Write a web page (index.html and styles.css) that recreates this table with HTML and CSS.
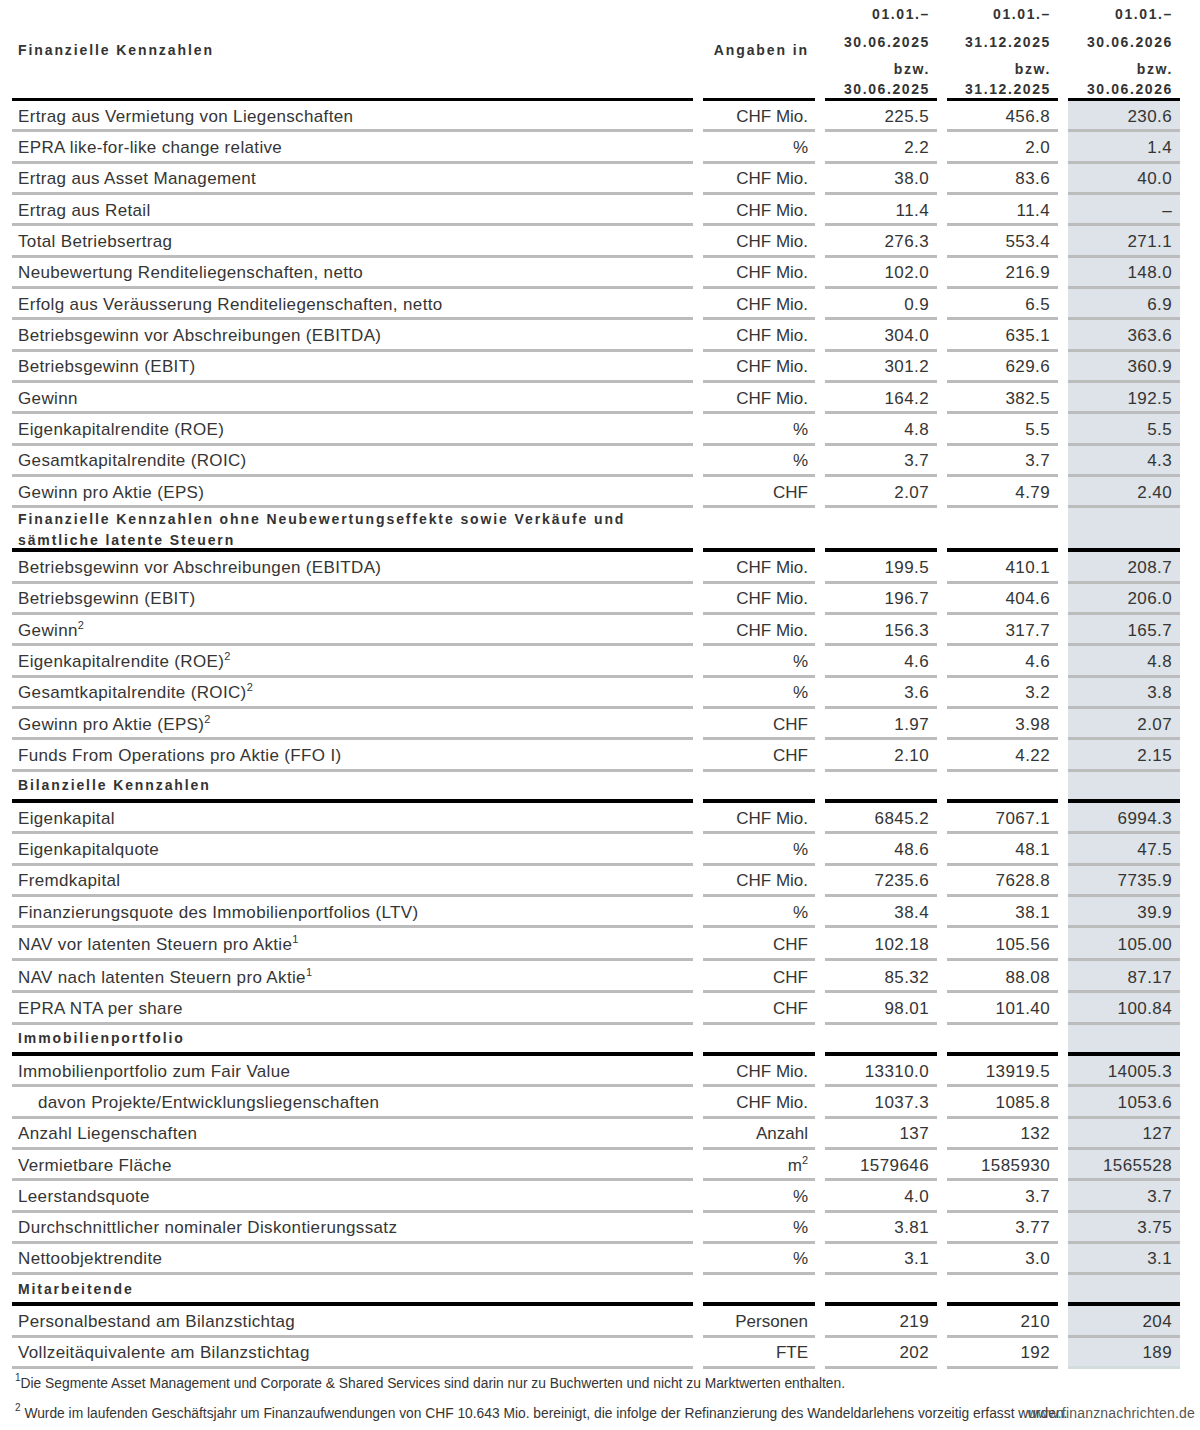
FILE: index.html
```html
<!doctype html>
<html lang="de">
  <head>
    <meta charset="UTF-8" />
    <meta name="viewport" content="width=device-width, initial-scale=1.0" />
    <title>Finanzielle Kennzahlen</title>
    <link rel="stylesheet" href="styles.css">
  </head>
  <body>
    <main class="Page">
      <table class="Kpi">
        <colgroup>
          <col class="Kpi-colLabel" />
          <col class="Kpi-colUnit" />
          <col class="Kpi-colNum" />
          <col class="Kpi-colNum Kpi-colNum--narrow" />
          <col class="Kpi-colNum" />
        </colgroup>
        <thead>
          <tr>
            <th class="Kpi-head Kpi-head--label">Finanzielle Kennzahlen</th>
            <th class="Kpi-head Kpi-head--unit">Angaben in</th>
            <th class="Kpi-head Kpi-head--date">
              <span class="l1">01.01.–</span><span class="l2">30.06.2025</span><span class="l3">bzw.</span><span class="l4">30.06.2025</span>
            </th>
            <th class="Kpi-head Kpi-head--date">
              <span class="l1">01.01.–</span><span class="l2">31.12.2025</span><span class="l3">bzw.</span><span class="l4">31.12.2025</span>
            </th>
            <th class="Kpi-head Kpi-head--date">
              <span class="l1">01.01.–</span><span class="l2">30.06.2026</span><span class="l3">bzw.</span><span class="l4">30.06.2026</span>
            </th>
          </tr>
        </thead>
        <tbody>
          <tr class="Row"><td>Ertrag aus Vermietung von Liegenschaften</td><td>CHF Mio.</td><td>225.5</td><td>456.8</td><td class="cur">230.6</td></tr>
          <tr class="Row"><td>EPRA like-for-like change relative</td><td>%</td><td>2.2</td><td>2.0</td><td class="cur">1.4</td></tr>
          <tr class="Row"><td>Ertrag aus Asset Management</td><td>CHF Mio.</td><td>38.0</td><td>83.6</td><td class="cur">40.0</td></tr>
          <tr class="Row"><td>Ertrag aus Retail</td><td>CHF Mio.</td><td>11.4</td><td>11.4</td><td class="cur">–</td></tr>
          <tr class="Row"><td>Total Betriebsertrag</td><td>CHF Mio.</td><td>276.3</td><td>553.4</td><td class="cur">271.1</td></tr>
          <tr class="Row"><td>Neubewertung Renditeliegenschaften, netto</td><td>CHF Mio.</td><td>102.0</td><td>216.9</td><td class="cur">148.0</td></tr>
          <tr class="Row"><td>Erfolg aus Veräusserung Renditeliegenschaften, netto</td><td>CHF Mio.</td><td>0.9</td><td>6.5</td><td class="cur">6.9</td></tr>
          <tr class="Row"><td>Betriebsgewinn vor Abschreibungen (EBITDA)</td><td>CHF Mio.</td><td>304.0</td><td>635.1</td><td class="cur">363.6</td></tr>
          <tr class="Row"><td>Betriebsgewinn (EBIT)</td><td>CHF Mio.</td><td>301.2</td><td>629.6</td><td class="cur">360.9</td></tr>
          <tr class="Row"><td>Gewinn</td><td>CHF Mio.</td><td>164.2</td><td>382.5</td><td class="cur">192.5</td></tr>
          <tr class="Row"><td>Eigenkapitalrendite (ROE)</td><td>%</td><td>4.8</td><td>5.5</td><td class="cur">5.5</td></tr>
          <tr class="Row"><td>Gesamtkapitalrendite (ROIC)</td><td>%</td><td>3.7</td><td>3.7</td><td class="cur">4.3</td></tr>
          <tr class="Row"><td>Gewinn pro Aktie (EPS)</td><td>CHF</td><td>2.07</td><td>4.79</td><td class="cur">2.40</td></tr>

          <tr class="Section Section--double"><td><div class="Section-text">Finanzielle Kennzahlen ohne Neubewertungseffekte sowie Verkäufe und<br />sämtliche latente Steuern</div></td><td></td><td></td><td></td><td class="cur"></td></tr>
          <tr class="Row"><td>Betriebsgewinn vor Abschreibungen (EBITDA)</td><td>CHF Mio.</td><td>199.5</td><td>410.1</td><td class="cur">208.7</td></tr>
          <tr class="Row"><td>Betriebsgewinn (EBIT)</td><td>CHF Mio.</td><td>196.7</td><td>404.6</td><td class="cur">206.0</td></tr>
          <tr class="Row"><td>Gewinn<sup>2</sup></td><td>CHF Mio.</td><td>156.3</td><td>317.7</td><td class="cur">165.7</td></tr>
          <tr class="Row"><td>Eigenkapitalrendite (ROE)<sup>2</sup></td><td>%</td><td>4.6</td><td>4.6</td><td class="cur">4.8</td></tr>
          <tr class="Row"><td>Gesamtkapitalrendite (ROIC)<sup>2</sup></td><td>%</td><td>3.6</td><td>3.2</td><td class="cur">3.8</td></tr>
          <tr class="Row"><td>Gewinn pro Aktie (EPS)<sup>2</sup></td><td>CHF</td><td>1.97</td><td>3.98</td><td class="cur">2.07</td></tr>
          <tr class="Row"><td>Funds From Operations pro Aktie (FFO I)</td><td>CHF</td><td>2.10</td><td>4.22</td><td class="cur">2.15</td></tr>

          <tr class="Section"><td>Bilanzielle Kennzahlen</td><td></td><td></td><td></td><td class="cur"></td></tr>
          <tr class="Row"><td>Eigenkapital</td><td>CHF Mio.</td><td>6845.2</td><td>7067.1</td><td class="cur">6994.3</td></tr>
          <tr class="Row"><td>Eigenkapitalquote</td><td>%</td><td>48.6</td><td>48.1</td><td class="cur">47.5</td></tr>
          <tr class="Row"><td>Fremdkapital</td><td>CHF Mio.</td><td>7235.6</td><td>7628.8</td><td class="cur">7735.9</td></tr>
          <tr class="Row"><td>Finanzierungsquote des Immobilienportfolios (LTV)</td><td>%</td><td>38.4</td><td>38.1</td><td class="cur">39.9</td></tr>
          <tr class="Row Row--tall"><td>NAV vor latenten Steuern pro Aktie<sup>1</sup></td><td>CHF</td><td>102.18</td><td>105.56</td><td class="cur">105.00</td></tr>
          <tr class="Row Row--tall"><td>NAV nach latenten Steuern pro Aktie<sup>1</sup></td><td>CHF</td><td>85.32</td><td>88.08</td><td class="cur">87.17</td></tr>
          <tr class="Row"><td>EPRA NTA per share</td><td>CHF</td><td>98.01</td><td>101.40</td><td class="cur">100.84</td></tr>

          <tr class="Section"><td>Immobilienportfolio</td><td></td><td></td><td></td><td class="cur"></td></tr>
          <tr class="Row"><td>Immobilienportfolio zum Fair Value</td><td>CHF Mio.</td><td>13310.0</td><td>13919.5</td><td class="cur">14005.3</td></tr>
          <tr class="Row"><td class="indent">davon Projekte/Entwicklungsliegenschaften</td><td>CHF Mio.</td><td>1037.3</td><td>1085.8</td><td class="cur">1053.6</td></tr>
          <tr class="Row"><td>Anzahl Liegenschaften</td><td>Anzahl</td><td>137</td><td>132</td><td class="cur">127</td></tr>
          <tr class="Row"><td>Vermietbare Fläche</td><td>m<sup>2</sup></td><td>1579646</td><td>1585930</td><td class="cur">1565528</td></tr>
          <tr class="Row"><td>Leerstandsquote</td><td>%</td><td>4.0</td><td>3.7</td><td class="cur">3.7</td></tr>
          <tr class="Row"><td>Durchschnittlicher nominaler Diskontierungssatz</td><td>%</td><td>3.81</td><td>3.77</td><td class="cur">3.75</td></tr>
          <tr class="Row"><td>Nettoobjektrendite</td><td>%</td><td>3.1</td><td>3.0</td><td class="cur">3.1</td></tr>

          <tr class="Section"><td>Mitarbeitende</td><td></td><td></td><td></td><td class="cur"></td></tr>
          <tr class="Row"><td>Personalbestand am Bilanzstichtag</td><td>Personen</td><td>219</td><td>210</td><td class="cur">204</td></tr>
          <tr class="Row Row--last"><td>Vollzeitäquivalente am Bilanzstichtag</td><td>FTE</td><td>202</td><td>192</td><td class="cur">189</td></tr>
        </tbody>
      </table>

      <div class="Notes">
        <p><sup>1</sup>Die Segmente Asset Management und Corporate &amp; Shared Services sind darin nur zu Buchwerten und nicht zu Marktwerten enthalten.</p>
        <p><sup>2</sup> Wurde im laufenden Geschäftsjahr um Finanzaufwendungen von CHF 10.643 Mio. bereinigt, die infolge der Refinanzierung des Wandeldarlehens vorzeitig erfasst wurden.</p>
      </div>

      <span class="Watermark">www.finanznachrichten.de</span>
    </main>
  </body>
</html>
```

FILE: styles.css
```css
:root {
  --color-text: #353535;
  --color-rule: #bcbcbc;
  --color-strong: #000;
  --color-current: #dde3e8;
}

body {
  margin: 0;
  font-family: "Liberation Sans", Arial, sans-serif;
  color: var(--color-text);
  background-color: #fff;
}

.Page {
  position: relative;
  width: 1200px;
  height: 1430px;
  overflow: hidden;
}

/* Table */
.Kpi {
  margin-left: 2px;
  border-collapse: separate;
  border-spacing: 10px 0;
  table-layout: fixed;
  width: 1188px;
}

.Kpi-colLabel { width: 681px; }
.Kpi-colUnit { width: 112px; }
.Kpi-colNum { width: 112px; }
.Kpi-colNum--narrow { width: 111px; }

.Kpi th,
.Kpi td {
  padding: 0 7px;
  box-sizing: border-box;
}

/* Header */
.Kpi-head {
  height: 101px;
  border-bottom: 3px solid var(--color-strong);
  font-size: 14px;
  font-weight: bold;
  letter-spacing: 1.9px;
  color: #333;
  vertical-align: middle;
}

.Kpi-head--label {
  text-align: left;
  padding-left: 6px !important;
  padding-top: 2px !important;
}

.Kpi-head--unit {
  text-align: right;
  padding-right: 6px !important;
  padding-top: 2px !important;
}

.Kpi-head--date {
  text-align: right;
  vertical-align: top;
  letter-spacing: 1.6px;
  padding-right: 7px !important;
}

.Kpi-head--date span {
  display: block;
}

.Kpi-head--date .l1,
.Kpi-head--date .l2 { height: 28px; line-height: 28px; }
.Kpi-head--date .l3 { height: 24px; line-height: 26px; }
.Kpi-head--date .l4 { height: 18px; line-height: 18px; }

/* Data rows */
.Row td {
  height: 31.33px;
  padding-top: 3px;
  border-bottom: 3px solid var(--color-rule);
  font-size: 17px;
  text-align: right;
  vertical-align: middle;
  white-space: nowrap;
}

.Row--tall td {
  height: 32.5px;
  padding-top: 5px;
}

.Row td:first-child {
  text-align: left;
  padding-left: 6px;
  letter-spacing: 0.35px;
}

.Row td:nth-child(n + 3) {
  letter-spacing: 0.4px;
  padding-right: 8px;
}

.Row td.indent {
  padding-left: 26px;
}

.Row sup,
.Notes sup {
  font-size: 11px;
  line-height: 0;
  vertical-align: 7px;
}

.cur {
  background-color: var(--color-current);
}

.Row--last td.cur {
  border-bottom-color: #d3dcdc;
}

/* Section headings */
.Section td {
  height: 31.33px;
  border-bottom: 4px solid var(--color-strong);
  font-size: 14px;
  font-weight: bold;
  letter-spacing: 1.9px;
  color: #333;
  vertical-align: middle;
}

.Section td:first-child {
  padding-left: 6px;
}

.Section--double td {
  height: 44px;
}

.Section-text {
  height: 40px;
  line-height: 21px;
  padding-top: 1px;
  box-sizing: border-box;
}

/* Footnotes */
.Notes {
  padding-left: 15px;
  font-size: 13.8px;
}

.Notes p {
  margin: 0;
  height: 30px;
  line-height: 30px;
}

.Notes sup {
  font-size: 10px;
}

.Notes p:first-child {
  margin-top: 0;
}

.Watermark {
  position: absolute;
  right: 5px;
  top: 1405px;
  font-size: 14px;
  color: #555;
  letter-spacing: 0.2px;
}
```
